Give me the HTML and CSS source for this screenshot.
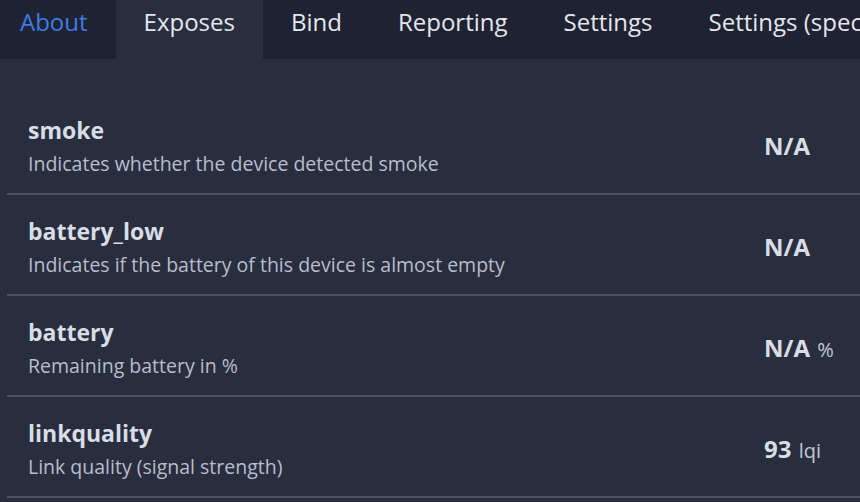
FILE: index.html
```html
<!DOCTYPE html>
<html>
<head>
<meta charset="utf-8">
<link rel="stylesheet" href="styles.css">
</head>
<body>
<nav class="tabs">
  <a class="tab tab-active-link">About</a>
  <a class="tab tab-current">Exposes</a>
  <a class="tab">Bind</a>
  <a class="tab">Reporting</a>
  <a class="tab">Settings</a>
  <a class="tab">Settings (specific)</a>
</nav>
<main class="content">
  <div class="row">
    <div class="info">
      <div class="name">smoke</div>
      <div class="desc">Indicates whether the device detected smoke</div>
    </div>
    <div class="value">N/A</div>
  </div>
  <div class="row">
    <div class="info">
      <div class="name">battery_low</div>
      <div class="desc">Indicates if the battery of this device is almost empty</div>
    </div>
    <div class="value">N/A</div>
  </div>
  <div class="row">
    <div class="info">
      <div class="name">battery</div>
      <div class="desc">Remaining battery in %</div>
    </div>
    <div class="value">N/A <span class="unit">%</span></div>
  </div>
  <div class="row">
    <div class="info">
      <div class="name">linkquality</div>
      <div class="desc">Link quality (signal strength)</div>
    </div>
    <div class="value">93 <span class="unit">lqi</span></div>
  </div>
</main>
</body>
</html>
```

FILE: styles.css
```css
html, body {
  margin: 0;
  padding: 0;
  background: #292e3f;
  overflow: hidden;
  width: 860px;
  height: 502px;
}
body {
  font-family: "Open Sans", "Noto Sans", sans-serif;
  color: #dfe2ea;
}
.tabs {
  display: flex;
  height: 59px;
  background: #1f2231;
  white-space: nowrap;
  overflow: hidden;
}
.tab {
  display: block;
  padding: 5px 28px 0 28px;
  font-size: 24px;
  line-height: 34px;
  color: #e4e6ee;
  flex: none;
}
.tab-active-link {
  color: #3d7ce8;
  padding-left: 20px;
}
.tab-current {
  background: #292e3f;
}
.content {
  padding: 35px 0 0 7px;
}
.row {
  display: grid;
  grid-template-columns: 736px 1fr;
  align-items: start;
  height: 99px;
  padding-left: 21px;
  border-bottom: 2px solid #4b5061;
}
.info {
  padding-top: 21px;
}
.name {
  font-size: 23px;
  font-weight: 700;
  color: #d9dde6;
  line-height: 30px;
}
.desc {
  font-size: 19.5px;
  color: #b9bdcb;
  line-height: 37px;
}
.value {
  padding-top: 37px;
  font-size: 24px;
  font-weight: 700;
  line-height: 30px;
  color: #d9dde6;
  white-space: nowrap;
}
.unit {
  font-size: 20px;
  font-weight: 400;
  color: #c3c7d4;
  margin-left: 1px;
}
```
